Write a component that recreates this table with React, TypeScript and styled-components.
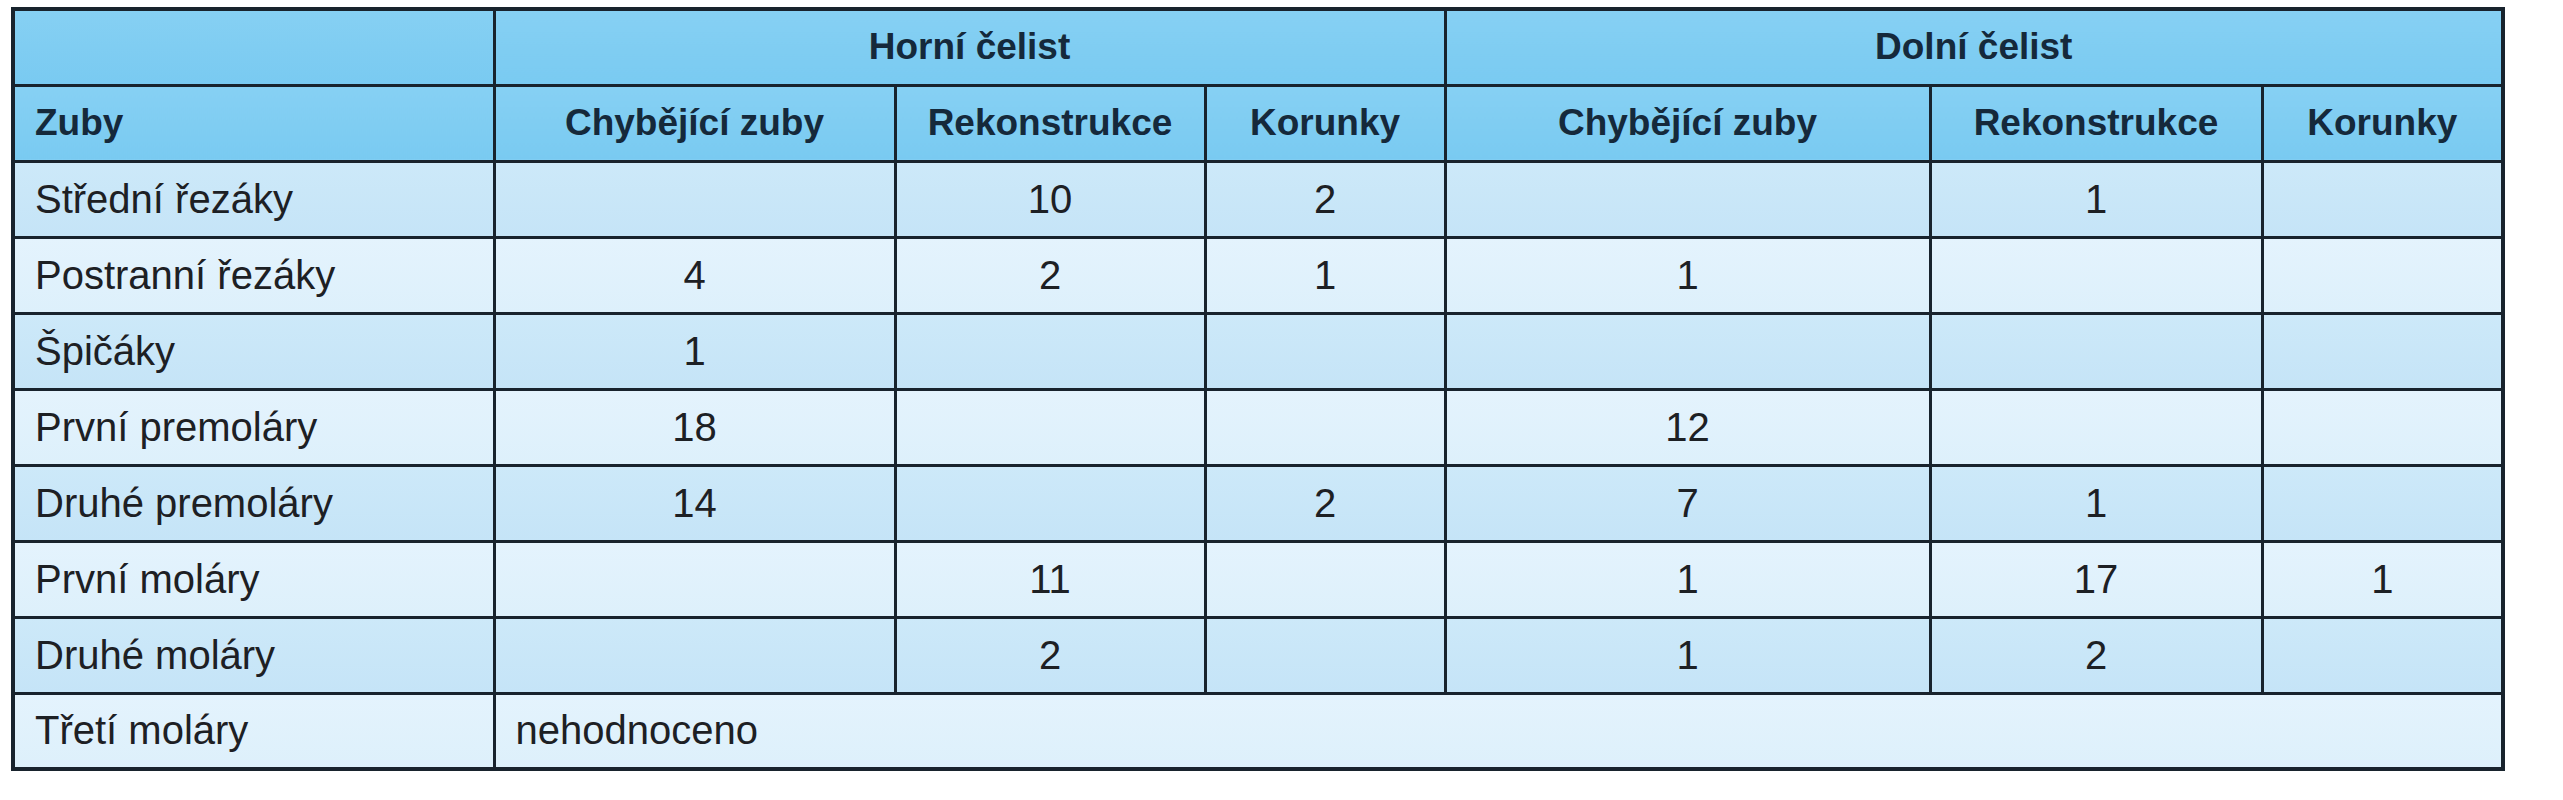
import React from "react";
import styled, { createGlobalStyle } from "styled-components";

const GlobalStyle = createGlobalStyle`
	body {
		margin: 0;
		background: #ffffff;
		font-family: "Liberation Sans", Arial, sans-serif;
	}
`;

const Page = styled.div`
	padding: 7px 0 0 11px;
`;

const Table = styled.table`
	border-collapse: collapse;
	table-layout: fixed;
	width: 2492px;
	border: 4px solid #18232d;
`;

const HeadRow = styled.tr`
	height: 76px;
`;

const BodyRow = styled.tr<{ $tone: "mid" | "light" }>`
	height: 76px;
	background: ${({ $tone }) =>
		$tone === "mid"
			? "linear-gradient(#cde9f9, #c5e4f7)"
			: "linear-gradient(#e4f3fd, #ddf0fb)"};
`;

const HeadCell = styled.th<{ $left?: boolean }>`
	background: linear-gradient(#86d0f3, #79caf1);
	border: 3px solid #18232d;
	padding: 0 20px;
	font-size: 37px;
	font-weight: 700;
	color: #15293b;
	text-align: ${({ $left }) => ($left ? "left" : "center")};
	white-space: nowrap;
`;

const Cell = styled.td<{ $left?: boolean }>`
	border: 3px solid #18232d;
	padding: 0 20px;
	font-size: 40px;
	color: #1d2024;
	text-align: ${({ $left }) => ($left ? "left" : "center")};
	white-space: nowrap;
`;

const widths = [481, 401, 310, 240, 485, 332, 241];
const subHeads = ["Chybějící zuby", "Rekonstrukce", "Korunky", "Chybějící zuby", "Rekonstrukce", "Korunky"];

const rows: string[][] = [
	["Střední řezáky", "", "10", "2", "", "1", ""],
	["Postranní řezáky", "4", "2", "1", "1", "", ""],
	["Špičáky", "1", "", "", "", "", ""],
	["První premoláry", "18", "", "", "12", "", ""],
	["Druhé premoláry", "14", "", "2", "7", "1", ""],
	["První moláry", "", "11", "", "1", "17", "1"],
	["Druhé moláry", "", "2", "", "1", "2", ""],
];

const App = () => (
	<Page>
		<GlobalStyle />
		<Table>
			<colgroup>
				{widths.map((w, i) => (
					<col key={i} style={{ width: w }} />
				))}
			</colgroup>
			<thead>
				<HeadRow>
					<HeadCell />
					<HeadCell colSpan={3}>Horní čelist</HeadCell>
					<HeadCell colSpan={3}>Dolní čelist</HeadCell>
				</HeadRow>
				<HeadRow>
					<HeadCell $left>Zuby</HeadCell>
					{subHeads.map((h, i) => (
						<HeadCell key={i}>{h}</HeadCell>
					))}
				</HeadRow>
			</thead>
			<tbody>
				{rows.map((r, i) => (
					<BodyRow key={r[0]} $tone={i % 2 === 0 ? "mid" : "light"}>
						{r.map((v, j) => (
							<Cell key={j} $left={j === 0}>
								{v}
							</Cell>
						))}
					</BodyRow>
				))}
				<BodyRow $tone="light">
					<Cell $left>Třetí moláry</Cell>
					<Cell $left colSpan={6}>
						nehodnoceno
					</Cell>
				</BodyRow>
			</tbody>
		</Table>
	</Page>
);

export default App;
